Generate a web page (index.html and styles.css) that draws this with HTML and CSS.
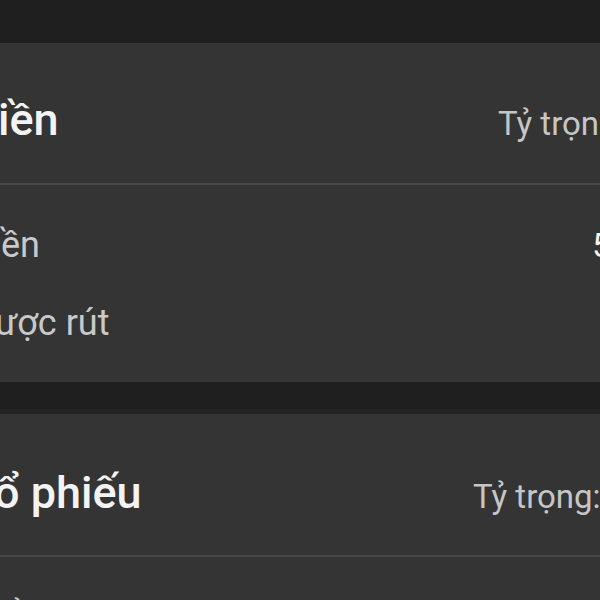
FILE: index.html
```html
<!DOCTYPE html>
<html lang="vi">
<head>
<meta charset="utf-8">
<title>Tài sản</title>
<link rel="stylesheet" href="styles.css">
</head>
<body>
<div class="screen">
  <div class="band band-top"></div>
  <section class="card">
    <div class="card-head head-cash">
      <h2 class="title cut-xs">iền</h2>
      <span class="weight">Tỷ trọn</span>
    </div>
    <div class="divider"></div>
    <div class="card-body">
      <div class="row">
        <span class="label cut-sm">ền</span>
        <span class="value">5</span>
      </div>
      <div class="row">
        <span class="label cut">ược rút</span>
      </div>
    </div>
  </section>
  <div class="band band-mid"></div>
  <section class="card">
    <div class="card-head head-stock">
      <h2 class="title cut">ổ phiếu</h2>
      <span class="weight">Tỷ trọng:</span>
    </div>
    <div class="divider"></div>
    <div class="card-body">
      <div class="row">
        <span class="label">ổng giá trị</span>
      </div>
    </div>
  </section>
</div>
</body>
</html>
```

FILE: styles.css
```css
html, body {
  margin: 0;
  padding: 0;
  background: #1f1f1f;
  overflow: hidden;
}

body {
  width: 600px;
  height: 600px;
  font-family: Roboto, "Noto Sans", "Liberation Sans", sans-serif;
}

.screen {
  display: flex;
  flex-direction: column;
}

.band {
  background: #1f1f1f;
}

.band-top {
  height: 43px;
}

.band-mid {
  height: 27px;
  border-bottom: 5px solid #232323;
}

.card {
  background: #343434;
}

.card-head {
  display: grid;
  align-items: baseline;
  height: 44px;
  line-height: 44px;
  white-space: nowrap;
}

.head-cash {
  grid-template-columns: 498px max-content;
  padding: 55px 0 41px;
}

.head-stock {
  grid-template-columns: 473px max-content;
  padding: 57px 0 40px;
}

.title {
  margin: 0;
  font-size: 45px;
  font-weight: 500;
  color: #f3f3f3;
}

.title.cut {
  margin-left: -6px;
}

.title.cut-xs {
  margin-left: -2px;
}

.weight {
  font-size: 33px;
  color: #c6c6c6;
}

.divider {
  height: 2px;
  background: #474747;
}

.card-body {
  padding: 21px 0 20px;
}

.row {
  display: grid;
  grid-template-columns: 592px max-content;
  height: 78px;
  line-height: 78px;
  white-space: nowrap;
}

.label {
  font-size: 36px;
  color: #c9c9c9;
}

.label.cut {
  margin-left: -5px;
}

.label.cut-sm {
  margin-left: 1px;
}

.value {
  font-size: 34px;
  color: #f5f5f5;
}
```
